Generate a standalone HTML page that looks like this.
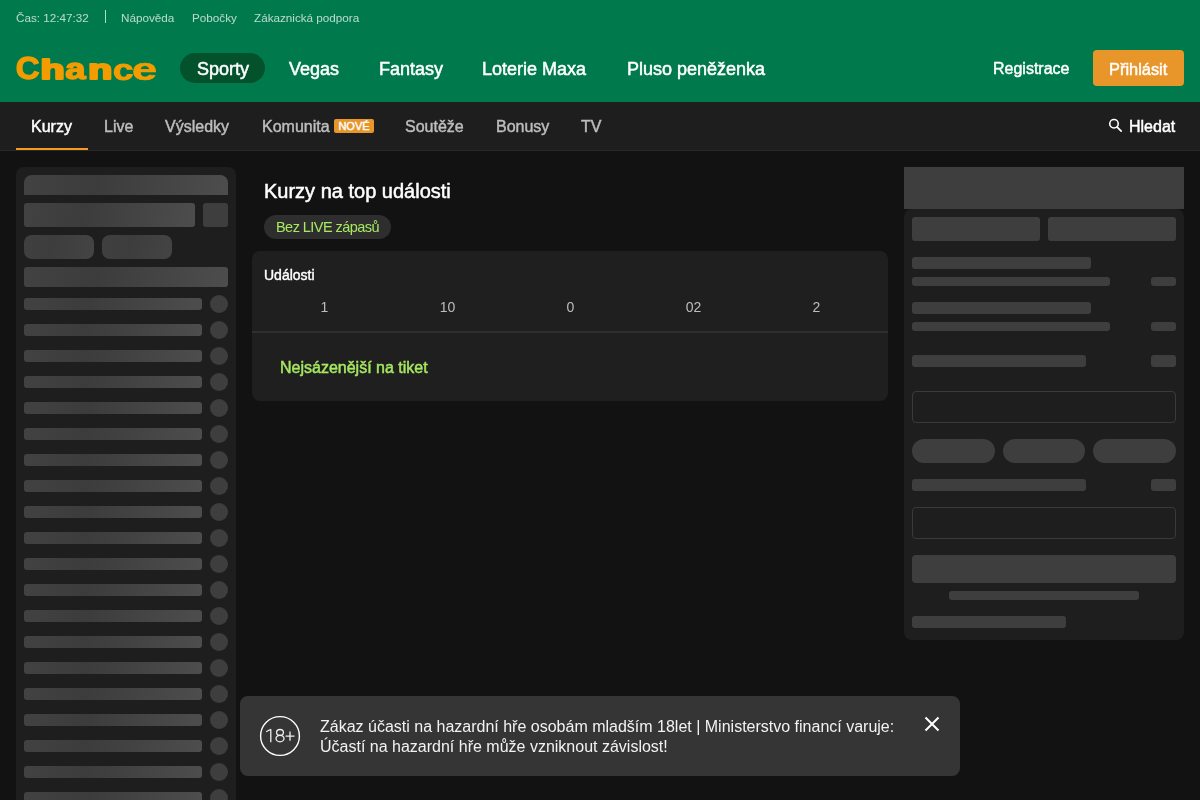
<!DOCTYPE html>
<html lang="cs">
<head>
<meta charset="utf-8">
<title>Chance</title>
<style>
*{box-sizing:border-box;margin:0;padding:0}
html,body{width:1200px;height:800px;overflow:hidden;background:#121212;font-family:"Liberation Sans",sans-serif;color:#fff}
.a{position:absolute;white-space:nowrap;will-change:transform}
.hdr{position:absolute;left:0;top:0;width:1200px;height:102px;background:#007a4c}
.top{font-size:11.7px;line-height:12px;color:rgba(255,255,255,.72)}
.sep{position:absolute;left:105px;top:10px;width:1px;height:13px;background:rgba(255,255,255,.72)}
.nav{font-size:18px;line-height:18px;color:#fff;-webkit-text-stroke:.5px #fff}
.pill{position:absolute;left:180px;top:53px;width:85px;height:30px;border-radius:15px;background:#03522c}
.reg{font-size:16px;line-height:16px;color:#fff;-webkit-text-stroke:.45px #fff}
.btn{position:absolute;left:1093px;top:50px;width:91px;height:36px;border-radius:4px;background:#e8962a}
.sub{position:absolute;left:0;top:102px;width:1200px;height:49px;background:#1e1e1e;border-bottom:1px solid #2a2a2a}
.tab{font-size:16px;line-height:16px;color:#bdbdbd;-webkit-text-stroke:.45px currentColor}
.ul{position:absolute;left:16px;top:148px;width:72px;height:2px;background:#f39c1f}
.badge{position:absolute;left:334px;top:119px;width:40px;height:14px;border-radius:2px;background:#e8962a;font-size:11px;line-height:14px;text-align:center;color:#fff;-webkit-text-stroke:.4px #fff}
.side{position:absolute;left:16px;top:167px;width:220px;height:660px;border-radius:8px;background:#1e1e1e}
.sk{position:absolute;background:linear-gradient(100deg,#424242 0%,#3c3c3c 35%,#4d4d4d 100%);border-radius:3px}
.skp{position:absolute;background:linear-gradient(100deg,#404040 0%,#3d3d3d 40%,#444 100%);border-radius:8px}
.ci{position:absolute;width:18px;height:18px;border-radius:50%;background:#3e3e3e}
.rp{position:absolute;left:904px;top:209px;width:280px;height:431px;border-radius:8px;background:#1e1e1e}
.rs{position:absolute;background:#3e3e3e;border-radius:3px}
.inp{position:absolute;left:912px;width:264px;height:32px;border:1px solid #3a3a3a;border-radius:4px}
.card{position:absolute;left:252px;top:251px;width:636px;height:150px;border-radius:8px;background:#1f1f1f}
.ban{position:absolute;left:240px;top:696px;width:720px;height:80px;border-radius:8px;background:#353535}
</style>
</head>
<body>
<div class="hdr"></div>
<div class="a top" style="left:16px;top:12px">Čas: 12:47:32</div>
<div class="sep"></div>
<div class="a top" style="left:121px;top:12px">Nápověda</div>
<div class="a top" style="left:192px;top:12px">Pobočky</div>
<div class="a top" style="left:254px;top:12px">Zákaznická podpora</div>

<svg class="a" style="left:0;top:0" width="170" height="100" viewBox="0 0 170 100"><g transform="translate(0 0.7)" font-family="Liberation Sans" font-weight="700" font-size="100" fill="#f39c00" stroke="#f39c00" stroke-linejoin="round"><text stroke-width="4" transform="matrix(0.3304 0 0 0.3133 15.74 78.76)">C</text><text stroke-width="8" transform="matrix(0.3946 0 0 0.2765 40.52 78.29)">h</text><text stroke-width="5" transform="matrix(0.3644 0 0 0.2869 65.30 78.55)">a</text><text stroke-width="8" transform="matrix(0.3929 0 0 0.2758 88.32 78.20)">n</text><text stroke-width="3" transform="matrix(0.3731 0 0 0.2983 112.65 78.81)">c</text><text stroke-width="2" transform="matrix(0.4500 0 0 0.3088 132.05 79.08)">e</text></g></svg>

<div class="pill"></div>
<div class="a nav" style="left:197px;top:60px">Sporty</div>
<div class="a nav" style="left:289px;top:60px">Vegas</div>
<div class="a nav" style="left:379px;top:60px">Fantasy</div>
<div class="a nav" style="left:482px;top:60px">Loterie Maxa</div>
<div class="a nav" style="left:627px;top:60px">Pluso peněženka</div>

<div class="a reg" style="left:993px;top:61px">Registrace</div>
<div class="btn"></div>
<div class="a reg" style="left:1109px;top:61px;font-size:16.4px">Přihlásit</div>

<div class="sub"></div>
<div class="a tab" style="left:31px;top:119px;color:#fff">Kurzy</div>
<div class="ul"></div>
<div class="a tab" style="left:104px;top:119px">Live</div>
<div class="a tab" style="left:165px;top:119px">Výsledky</div>
<div class="a tab" style="left:262px;top:119px">Komunita</div>
<div class="badge">NOVÉ</div>
<div class="a tab" style="left:405px;top:119px">Soutěže</div>
<div class="a tab" style="left:496px;top:119px">Bonusy</div>
<div class="a tab" style="left:581px;top:119px">TV</div>
<svg class="a" style="left:1108px;top:118px" width="16" height="16" viewBox="0 0 16 16"><circle cx="6" cy="5.8" r="4.25" fill="none" stroke="#fff" stroke-width="1.6"/><path d="M9.2 9.1 L13.2 13.2" stroke="#fff" stroke-width="1.7" stroke-linecap="round"/></svg>
<div class="a tab" style="left:1129px;top:119px;color:#fff">Hledat</div>

<!-- left sidebar -->
<div class="side"></div>
<div class="sk" style="left:24px;top:175px;width:204px;height:20px;border-radius:8px 8px 0 0"></div>
<div class="sk" style="left:24px;top:203px;width:171px;height:24px"></div>
<div class="ci" style="left:203px;top:203px;width:25px;height:24px;border-radius:3px"></div>
<div class="skp" style="left:24px;top:235px;width:70px;height:24px"></div>
<div class="skp" style="left:102px;top:235px;width:70px;height:24px"></div>
<div class="sk" style="left:24px;top:267px;width:204px;height:20px"></div>
<div class="sk" style="left:24px;top:298px;width:178px;height:12px"></div>
<div class="ci" style="left:210px;top:295px"></div>
<div class="sk" style="left:24px;top:324px;width:178px;height:12px"></div>
<div class="ci" style="left:210px;top:321px"></div>
<div class="sk" style="left:24px;top:350px;width:178px;height:12px"></div>
<div class="ci" style="left:210px;top:347px"></div>
<div class="sk" style="left:24px;top:376px;width:178px;height:12px"></div>
<div class="ci" style="left:210px;top:373px"></div>
<div class="sk" style="left:24px;top:402px;width:178px;height:12px"></div>
<div class="ci" style="left:210px;top:399px"></div>
<div class="sk" style="left:24px;top:428px;width:178px;height:12px"></div>
<div class="ci" style="left:210px;top:425px"></div>
<div class="sk" style="left:24px;top:454px;width:178px;height:12px"></div>
<div class="ci" style="left:210px;top:451px"></div>
<div class="sk" style="left:24px;top:480px;width:178px;height:12px"></div>
<div class="ci" style="left:210px;top:477px"></div>
<div class="sk" style="left:24px;top:506px;width:178px;height:12px"></div>
<div class="ci" style="left:210px;top:503px"></div>
<div class="sk" style="left:24px;top:532px;width:178px;height:12px"></div>
<div class="ci" style="left:210px;top:529px"></div>
<div class="sk" style="left:24px;top:558px;width:178px;height:12px"></div>
<div class="ci" style="left:210px;top:555px"></div>
<div class="sk" style="left:24px;top:584px;width:178px;height:12px"></div>
<div class="ci" style="left:210px;top:581px"></div>
<div class="sk" style="left:24px;top:610px;width:178px;height:12px"></div>
<div class="ci" style="left:210px;top:607px"></div>
<div class="sk" style="left:24px;top:636px;width:178px;height:12px"></div>
<div class="ci" style="left:210px;top:633px"></div>
<div class="sk" style="left:24px;top:662px;width:178px;height:12px"></div>
<div class="ci" style="left:210px;top:659px"></div>
<div class="sk" style="left:24px;top:688px;width:178px;height:12px"></div>
<div class="ci" style="left:210px;top:685px"></div>
<div class="sk" style="left:24px;top:714px;width:178px;height:12px"></div>
<div class="ci" style="left:210px;top:711px"></div>
<div class="sk" style="left:24px;top:740px;width:178px;height:12px"></div>
<div class="ci" style="left:210px;top:737px"></div>
<div class="sk" style="left:24px;top:766px;width:178px;height:12px"></div>
<div class="ci" style="left:210px;top:763px"></div>
<div class="sk" style="left:24px;top:792px;width:178px;height:12px"></div>
<div class="ci" style="left:210px;top:789px"></div>

<!-- center -->
<div class="a" style="left:264px;top:181px;font-size:20px;line-height:20px;color:#fff;-webkit-text-stroke:.5px #fff">Kurzy na top události</div>
<div class="a" style="left:264px;top:215px;width:127px;height:24px;border-radius:12px;background:#2e2e2e"></div>
<div class="a" style="left:276px;top:220px;font-size:14.5px;line-height:14px;letter-spacing:-.55px;color:#a6e860">Bez LIVE zápasů</div>
<div class="card"></div>
<div class="a" style="left:264px;top:268px;font-size:14px;line-height:14px;color:#fff;-webkit-text-stroke:.4px #fff">Události</div>
<div class="a" style="left:263px;top:300px;width:624px;font-size:14px;line-height:14px;color:#bdbdbd;display:flex">
  <span style="width:123px;text-align:center">1</span><span style="width:123px;text-align:center">10</span><span style="width:123px;text-align:center">0</span><span style="width:123px;text-align:center">02</span><span style="width:123px;text-align:center">2</span>
</div>
<div class="a" style="left:252px;top:331px;width:636px;height:2px;background:#2f2f2f"></div>
<div class="a" style="left:280px;top:360px;font-size:16px;line-height:16px;color:#a6e860;-webkit-text-stroke:.45px #a6e860">Nejsázenější na tiket</div>

<!-- right panel -->
<div class="rp"></div>
<div class="a" style="left:904px;top:167px;width:280px;height:42px;background:#3e3e3e"></div>
<div class="rs" style="left:912px;top:217px;width:128px;height:24px"></div>
<div class="rs" style="left:1048px;top:217px;width:128px;height:24px"></div>
<div class="rs" style="left:912px;top:257px;width:179px;height:12px"></div>
<div class="rs" style="left:912px;top:277px;width:198px;height:9px"></div>
<div class="rs" style="left:1151px;top:277px;width:25px;height:9px"></div>
<div class="rs" style="left:912px;top:302px;width:179px;height:12px"></div>
<div class="rs" style="left:912px;top:322px;width:198px;height:9px"></div>
<div class="rs" style="left:1151px;top:322px;width:25px;height:9px"></div>
<div class="rs" style="left:912px;top:355px;width:174px;height:12px"></div>
<div class="rs" style="left:1151px;top:355px;width:25px;height:12px"></div>
<div class="inp" style="top:391px"></div>
<div class="rs" style="left:912px;top:439px;width:83px;height:24px;border-radius:12px"></div>
<div class="rs" style="left:1003px;top:439px;width:82px;height:24px;border-radius:12px"></div>
<div class="rs" style="left:1093px;top:439px;width:83px;height:24px;border-radius:12px"></div>
<div class="rs" style="left:912px;top:479px;width:174px;height:12px"></div>
<div class="rs" style="left:1151px;top:479px;width:25px;height:12px"></div>
<div class="inp" style="top:507px"></div>
<div class="rs" style="left:912px;top:555px;width:264px;height:28px;border-radius:4px"></div>
<div class="rs" style="left:949px;top:591px;width:190px;height:9px"></div>
<div class="rs" style="left:912px;top:616px;width:154px;height:12px"></div>

<!-- banner -->
<div class="ban"></div>
<svg class="a" style="left:259px;top:715px" width="42" height="42" viewBox="0 0 42 42"><circle cx="21" cy="21" r="19.4" fill="none" stroke="#fff" stroke-width="1.4"/><g fill="none" stroke="#f0f0f0" stroke-width="1.3"><path d="M11.8 14.2 V27.2 M7.2 16.7 L11.8 14.2"/><ellipse cx="21" cy="17.4" rx="3.4" ry="2.9"/><ellipse cx="21" cy="23.6" rx="4" ry="3.2"/><path d="M26.6 21.2 H35.4 M31 16.6 V25.8"/></g></svg>
<div class="a" style="left:320px;top:717px;font-size:16px;line-height:20px;color:#f2f2f2">Zákaz účasti na hazardní hře osobám mladším 18let | Ministerstvo financí varuje:<br>Účastí na hazardní hře může vzniknout závislost!</div>
<svg class="a" style="left:924px;top:716px" width="16" height="16" viewBox="0 0 16 16"><path d="M1.5 1.5 L14.5 14.5 M14.5 1.5 L1.5 14.5" stroke="#fff" stroke-width="2"/></svg>
</body>
</html>
